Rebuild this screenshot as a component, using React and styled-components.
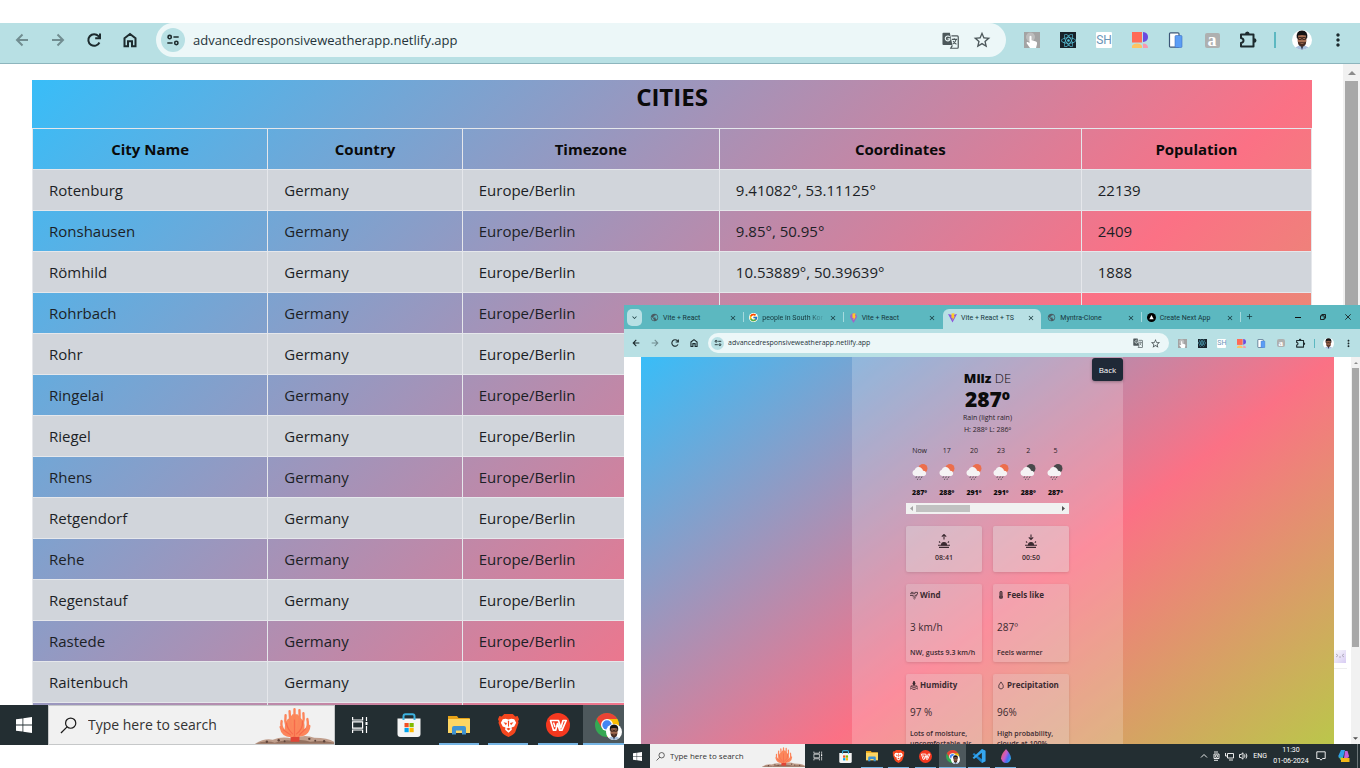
import React from "react";
import styled, { createGlobalStyle, css } from "styled-components";
import {
  MdStarBorder,
  MdMoreVert,
  MdPublic,
  MdKeyboardArrowDown,
  MdClose,
  MdAdd,
} from "react-icons/md";
import { FaReact, FaThermometerFull } from "react-icons/fa";
import { FcGoogle } from "react-icons/fc";

const Global = createGlobalStyle`
  *, *::before, *::after { box-sizing: border-box; }
  html, body, #root { margin: 0; height: 100%; }
  body {
    background: #fff;
    color: #111;
    font-family: "Open Sans", "Noto Sans", sans-serif;
    overflow: hidden;
  }
  button, input { font-family: inherit; color: inherit; }
  button { border: 0; background: none; padding: 0; }
  svg { display: block; flex: none; }
`;

const pageGradient = "linear-gradient(to bottom right, #38bdf8, #fb7185, #a3e635)";

/* ---------- shells ---------- */

const Desktop = styled.div`
  position: relative;
  display: flex;
  flex-direction: column;
  height: 100vh;
  padding: 23px 0;
`;

const Window = styled.section`
  flex: 1;
  min-height: 0;
  display: flex;
  flex-direction: column;
`;

const FrontWindow = styled(Window)`
  position: absolute;
  right: 0;
  bottom: 0;
  width: 736px;
  height: 463px;
  background: #fff;
`;

const Viewport = styled.div`
  flex: 1;
  min-height: 0;
  display: flex;
  overflow: hidden;
  background: #fff;
`;

/* ---------- browser toolbar ---------- */

const Bar = styled.header`
  flex: none;
  display: flex;
  align-items: center;
  height: ${(p) => (p.$small ? 28 : 41)}px;
  padding: 0 ${(p) => (p.$small ? 2 : 4)}px ${(p) => (p.$small ? 0 : 6)}px;
  background: #b8e0e4;
  color: #1d2b2e;
  ${(p) => !p.$small && css`border-bottom: 1px solid #8db5bd;`}
`;

const ButtonGroup = styled.div`
  display: flex;
  width: ${(p) => p.$width}px;
`;

const BarButton = styled.button`
  flex: 1;
  display: flex;
  align-items: center;
  justify-content: center;
  opacity: ${(p) => (p.$dim ? 0.45 : 1)};
`;

const AddressPill = styled.div`
  flex: 1;
  min-width: 0;
  display: flex;
  align-items: center;
  gap: ${(p) => (p.$small ? 4 : 8)}px;
  height: ${(p) => (p.$small ? 20 : 34)}px;
  margin: 0 ${(p) => (p.$small ? 4 : 8)}px;
  padding: 0 ${(p) => (p.$small ? 8 : 14)}px 0 ${(p) => (p.$small ? 3 : 5)}px;
  border-radius: 17px;
  background: #ecf7f8;
`;

const SiteBadge = styled.button`
  flex: none;
  display: flex;
  align-items: center;
  justify-content: center;
  width: ${(p) => (p.$small ? 13 : 24)}px;
  height: ${(p) => (p.$small ? 13 : 24)}px;
  border-radius: 50%;
  background: #b8e0e4;
`;

const Address = styled.input`
  flex: 1;
  min-width: 0;
  padding: 0;
  border: 0;
  outline: 0;
  background: none;
  font-size: ${(p) => (p.$small ? 7 : 13)}px;
  line-height: ${(p) => (p.$small ? 12 : 20)}px;
  color: #25343a;
`;

const PillActions = styled.div`
  display: flex;
  gap: ${(p) => (p.$small ? 7 : 13)}px;
  color: #4d585b;
`;

const BarDivider = styled.span`
  width: ${(p) => (p.$small ? 1 : 2)}px;
  height: ${(p) => (p.$small ? 9 : 16)}px;
  margin: 0 ${(p) => (p.$small ? 4 : 8)}px;
  background: #5cb8c1;
`;

const line = { fill: "none", stroke: "currentColor", strokeWidth: 2 };

const BackArrow = ({ size }) => (
  <svg width={size} height={size} viewBox="0 0 18 18" {...line}><path d="M15 9H4M9.500 3.500 4 9l5.500 5.500" /></svg>
);
const ForwardArrow = ({ size }) => (
  <svg width={size} height={size} viewBox="0 0 18 18" {...line}><path d="M3 9h11M8.500 3.500 14 9l-5.500 5.500" /></svg>
);
const ReloadIcon = ({ size }) => (
  <svg width={size} height={size} viewBox="0 0 18 18" {...line}>
    <path d="M14.400 11.500A5.800 5.800 0 1 1 13.500 5.200L14.500 6.500" />
    <path d="M15 2.500V7.300H10.200" />
  </svg>
);
const HomeIcon = ({ size }) => (
  <svg width={size} height={size} viewBox="0 0 18 18" {...line}>
    <path d="M3.500 7.200 9 3l5.500 4.200V15.200H11V10.200H7v5H3.500Z" />
  </svg>
);
const PuzzleIcon = ({ size }) => (
  <svg width={size} height={size} viewBox="0 0 20 20">
    <path d="M3 4.500H15.500V16.500H3V13Q5.500 12.500 5.500 10.500 5.500 8.500 3 8Z" fill="none" stroke="currentColor" strokeWidth="2" strokeLinejoin="round" />
    <path d="M7 4Q7 1.500 9.300 1.500T11.600 4ZM16 8.200Q18.500 8.200 18.500 10.500T16 12.800Z" fill="currentColor" />
  </svg>
);

function TuneIcon({ size }) {
  return (
    <svg width={size} height={size} viewBox="0 0 16 16" fill="none" stroke="#1d2b2e" strokeWidth="1.800">
      <circle cx="4.200" cy="4.600" r="1.900" />
      <path d="M8.500 4.600H14.500M1.500 11.400h6" />
      <circle cx="11.800" cy="11.400" r="1.900" />
    </svg>
  );
}

function Avatar({ size }) {
  return (
    <svg width={size} height={size} viewBox="0 0 20 20">
      <circle cx="10" cy="10" r="10" fill="#fff" />
      <path d="M3.400 17.500 7 15.500h6l3.600 2A10 10 0 0 1 10 20a10 10 0 0 1-6.600-2.500Z" fill="#a9c0dd" />
      <path d="m8.700 16 1.300 4 1.300-4Z" fill="#27324b" />
      <path d="M5.500 6.500Q5 16 10 16.500 15 16 14.500 6.500L12.500 3h-5Z" fill="#a56d52" />
      <path d="M4.800 8Q3.800.6 10 .5 16.200.6 15.200 8L14.300 9 13.800 5.500Q10 4.500 6.200 5.500L5.700 9Z" fill="#161314" />
      <path d="M5.800 11.500Q7 12.600 8 12.200h4q1 .4 2.200-.7-.4 4.900-4.200 5-3.800-.1-4.200-5Z" fill="#452a22" />
      <path d="M8.500 13.500h3" stroke="#a56d52" strokeWidth=".8" />
      <path d="M6.500 7.500h2.800v2H6.500zM10.700 7.500h2.800v2h-2.800zM9.300 8h1.400" fill="none" stroke="#2b1a16" strokeWidth=".8" />
    </svg>
  );
}

function TouchExt({ size }) {
  return (
    <svg width={size} height={size} viewBox="0 0 16 16">
      <rect width="16" height="16" fill="#a3a3a3" />
      <circle cx="6.500" cy="5" r="4.500" fill="#bdbdbd" />
      <path d="M5.500 4.500q1-1.500 2 0v3.700l4.500 1.300q1.500.8 1 2.500L12 16H6L2.500 11q.3-1.500 1.500-1l1.500 1.200Z" fill="#fff" />
    </svg>
  );
}

const ExtTile = styled.span`
  display: flex;
  align-items: center;
  justify-content: center;
  width: ${(p) => p.$size}px;
  height: ${(p) => p.$size}px;
  border-radius: ${(p) => p.$radius || 0}px;
  background: ${(p) => p.$bg};
  color: ${(p) => p.$color};
  font: ${(p) => p.$font || "inherit"};
`;

function ReactExt({ size }) {
  return (
    <ExtTile $size={size} $bg="#18222a" $color="#58c4dc">
      <FaReact size={size - 1} />
    </ExtTile>
  );
}

function BlocksExt({ size }) {
  return (
    <svg width={size} height={size} viewBox="0 0 16 16">
      <path d="M0 0h10v10.500H0z" fill="#ff6b57" />
      <path d="M11 0q5 .5 5 5t-5 5Z" fill="#6a4be0" />
      <path d="M0 16v-2q1-2.500 5-2.500t5 2.500v2Z" fill="#fdc463" />
      <path d="M11 11.500q5 0 5 4.500h-5Z" fill="#f79ab0" />
    </svg>
  );
}

function DeviceExt({ size }) {
  return (
    <svg width={size} height={size} viewBox="0 0 16 16">
      <rect x="1.500" y=".8" width="9.500" height="14.400" rx="1" fill="#fff" stroke="#3b5677" strokeWidth="1.200" />
      <rect x="7" y="3.500" width="7" height="12" rx="1" fill="#5b9df5" stroke="#3c6fc0" strokeWidth=".6" />
    </svg>
  );
}

function TranslateIcon({ size }) {
  return (
    <svg width={size} height={size} viewBox="0 0 18 18">
      <path d="M1.500.8h6.800l2.700 13H1.500q-1 0-1-1V1.800q0-1 1-1Z" fill="#4d585b" />
      <path d="M8.200 5.300A2.600 2.600 0 1 0 8.300 8.200V7.300H5.900" fill="none" stroke="#ecf7f8" strokeWidth="1.200" />
      <path d="M10 4.200h6.200q1 0 1 1v11q0 1-1 1H9.300l1.700-3" fill="none" stroke="#4d585b" strokeWidth="1.300" />
      <path d="M10.500 7.800H16M13 6.500v1.300M15 7.800q-.5 3-3.700 5M11.800 9.500q1.200 2.200 3.500 3.500" fill="none" stroke="#4d585b" strokeWidth="1.100" />
    </svg>
  );
}

function Toolbar({ small }) {
  const icon = small ? 11 : 20;
  const nav = small ? 10 : 18;
  const ext = small ? 9 : 16;
  return (
    <Bar $small={small}>
      <ButtonGroup $width={small ? 78 : 144}>
        <BarButton aria-label="Back" $dim={!small}><BackArrow size={nav} /></BarButton>
        <BarButton aria-label="Forward" $dim><ForwardArrow size={nav} /></BarButton>
        <BarButton aria-label="Reload"><ReloadIcon size={nav} /></BarButton>
        <BarButton aria-label="Home"><HomeIcon size={nav} /></BarButton>
      </ButtonGroup>
      <AddressPill $small={small}>
        <SiteBadge $small={small} aria-label="Site information"><TuneIcon size={small ? 8 : 14} /></SiteBadge>
        <Address
          $small={small}
          aria-label="Address"
          defaultValue="advancedresponsiveweatherapp.netlify.app"
          spellCheck={false}
        />
        <PillActions $small={small}>
          <BarButton aria-label="Translate"><TranslateIcon size={small ? 10 : 17} /></BarButton>
          <BarButton aria-label="Bookmark"><MdStarBorder size={icon} /></BarButton>
        </PillActions>
      </AddressPill>
      <ButtonGroup $width={small ? 137 : 252}>
        <BarButton aria-label="Touch"><TouchExt size={ext} /></BarButton>
        <BarButton aria-label="React tools"><ReactExt size={ext} /></BarButton>
        <BarButton aria-label="SH">
          <ExtTile $size={ext} $bg="#fff" $color="#6b95b8" $radius={1} $font={small ? "7px Roboto, sans-serif" : "12px Roboto, sans-serif"}>SH</ExtTile>
        </BarButton>
        <BarButton aria-label="Blocks"><BlocksExt size={ext} /></BarButton>
        <BarButton aria-label="Devices"><DeviceExt size={ext} /></BarButton>
        <BarButton aria-label="a">
          <ExtTile $size={small ? 8 : 15} $bg="#aeb0b0" $color="#fff" $radius={2} $font={small ? 'bold 9px "Liberation Serif", serif' : 'bold 18px "Liberation Serif", serif'}>a</ExtTile>
        </BarButton>
        <BarButton aria-label="Extensions"><PuzzleIcon size={icon} /></BarButton>
      </ButtonGroup>
      <BarDivider $small={small} />
      <ButtonGroup $width={small ? 39 : 72}>
        <BarButton aria-label="Profile"><Avatar size={icon} /></BarButton>
        <BarButton aria-label="Menu"><MdMoreVert size={icon} /></BarButton>
      </ButtonGroup>
    </Bar>
  );
}

/* ---------- scrollbars ---------- */

const Track = styled.div`
  flex: none;
  display: flex;
  flex-direction: column;
  align-items: center;
  width: ${(p) => (p.$small ? 9 : 17)}px;
  background: #f1f1f1;
`;

const Arrow = styled.span`
  display: flex;
  align-items: center;
  justify-content: center;
  height: ${(p) => (p.$small ? 11 : 17)}px;
`;

const Thumb = styled.div`
  flex: ${(p) => p.$grow};
  width: ${(p) => (p.$small ? 7 : 13)}px;
  background: #a8a8a8;
`;

const Rest = styled.div`
  flex: ${(p) => p.$grow};
`;

function Scrollbar({ small, thumb, rest }) {
  const s = small ? 4 : 8;
  return (
    <Track $small={small}>
      <Arrow $small={small}>
        <svg width={s} height={s} viewBox="0 0 8 8"><path d="M0 6 4 2l4 4Z" fill="#8b8b8b" /></svg>
      </Arrow>
      <Thumb $small={small} $grow={thumb} />
      <Rest $grow={rest} />
      {rest > 0 && (
        <Arrow $small={small}>
          <svg width={s + 1} height={s + 1} viewBox="0 0 8 8"><path d="M0 2 4 6l4-4Z" fill="#505050" /></svg>
        </Arrow>
      )}
    </Track>
  );
}

/* ---------- cities table ---------- */

const CitiesArea = styled.main`
  flex: 1;
  min-width: 0;
  padding: 16px 31px 0 32px;
`;

const CitiesCard = styled.div`
  min-height: 1275px;
  background: ${pageGradient};
`;

const Title = styled.h1`
  height: 48px;
  margin: 0;
  font-size: 24px;
  line-height: 34px;
  font-weight: 700;
  text-align: center;
  color: #0a0a0a;
`;

const Table = styled.table`
  width: 100%;
  table-layout: fixed;
  border-collapse: collapse;
`;

const cell = css`
  height: 41px;
  padding: 0 16px;
  border: 1px solid #e5e7eb;
  font-size: 15px;
  line-height: 24px;
`;

const Th = styled.th`
  ${cell}
  width: ${(p) => p.$width}%;
  font-weight: 700;
  text-align: center;
  color: #0a0a0a;
`;

const Td = styled.td`
  ${cell}
  color: #1c1f26;
`;

const Tr = styled.tr`
  &:nth-child(odd) { background: #d1d5db; }
`;

const columns = [
  ["City Name", 18.4],
  ["Country", 15.2],
  ["Timezone", 20.1],
  ["Coordinates", 28.3],
  ["Population", 18],
];

const cities = [
  ["Rotenburg", "9.41082°, 53.11125°", "22139"],
  ["Ronshausen", "9.85°, 50.95°", "2409"],
  ["Römhild", "10.53889°, 50.39639°", "1888"],
  ["Rohrbach"],
  ["Rohr"],
  ["Ringelai"],
  ["Riegel"],
  ["Rhens"],
  ["Retgendorf"],
  ["Rehe"],
  ["Regenstauf"],
  ["Rastede"],
  ["Raitenbuch"],
  [""],
];

function Cities() {
  return (
    <CitiesArea>
      <CitiesCard>
        <Title>CITIES</Title>
        <Table>
          <thead>
            <tr>{columns.map(([name, w]) => <Th key={name} $width={w}>{name}</Th>)}</tr>
          </thead>
          <tbody>
            {cities.map(([name, coords, population]) => (
              <Tr key={name}>
                <Td>{name}</Td>
                <Td>{name && "Germany"}</Td>
                <Td>{name && "Europe/Berlin"}</Td>
                <Td>{coords}</Td>
                <Td>{population}</Td>
              </Tr>
            ))}
          </tbody>
        </Table>
      </CitiesCard>
    </CitiesArea>
  );
}

/* ---------- tab strip ---------- */

const Strip = styled.nav`
  flex: none;
  display: flex;
  height: 24px;
  padding-left: 3px;
  background: #5cb8c0;
  color: #16373c;
`;

const TabSearch = styled.button`
  display: flex;
  align-items: center;
  justify-content: center;
  width: 15px;
  height: 17px;
  margin: 4px 3px 0 0;
  border-radius: 5px;
  background: #b8e0e4;
`;

const TabList = styled.div`
  display: flex;
  width: 596px;
  padding-top: 4px;
`;

const Tab = styled.div`
  flex: 1;
  min-width: 0;
  display: flex;
  align-items: center;
  gap: 4px;
  padding: 0 6px 3px 5px;
  ${(p) => p.$active && css`
    border-radius: 6px 6px 0 0;
    background: #b8e0e4;
  `}
`;

const TabLabel = styled.button`
  flex: 1;
  min-width: 0;
  white-space: nowrap;
  text-align: left;
  font-family: Roboto, sans-serif;
  font-size: 7px;
  line-height: 12px;
  ${(p) => p.$fade && css`mask-image: linear-gradient(to right, #000 75%, transparent);`}
`;

const TabDivider = styled.span`
  width: 1px;
  height: 10px;
  margin-top: 3px;
  background: ${(p) => (p.$hidden ? "transparent" : "#a5dade")};
`;

const IconButton = styled.button`
  flex: none;
  display: flex;
  align-items: center;
  justify-content: center;
`;

const NewTab = styled(IconButton)`
  width: 14px;
  margin: 3px auto 4px 1px;
`;

const WindowControls = styled.div`
  display: flex;
  width: 75px;
  button { flex: 1; }
`;

function ViteIcon({ round }) {
  return (
    <svg width="9" height="10" viewBox="0 0 9 10">
      {round
        ? <path d="M4.500 0Q8 1 8 4L4.500 10 1 4Q1 1 4.500 0Z" fill="#a064c8" />
        : <path d="M0 1 4.500 9.500 9 1 4.500 2Z" fill="#8a55e0" />}
      <path d="M3.500.5 6.500.2 6 3.500 7 3.300 4.500 7.500 4.600 4.700 3.400 5Z" fill="#ffc928" />
    </svg>
  );
}

const NextIcon = () => (
  <svg width="9" height="9" viewBox="0 0 9 9">
    <circle cx="4.500" cy="4.500" r="4.500" fill="#000" />
    <path d="m4.500 2 2.200 4.200H2.300Z" fill="#fff" />
  </svg>
);

const tabs = [
  { title: "Vite + React", icon: <MdPublic size={9} color="#4a5b62" />, divider: true },
  { title: "people in South Kor", icon: <FcGoogle size={9} />, divider: true, fade: true, google: true },
  { title: "Vite + React", icon: <ViteIcon round /> },
  { title: "Vite + React + TS", icon: <ViteIcon />, active: true },
  { title: "Myntra-Clone", icon: <MdPublic size={9} color="#4a5b62" />, divider: true },
  { title: "Create Next App", icon: <NextIcon />, divider: true },
];

const Favicon = styled.span`
  border-radius: 50%;
  background: ${(p) => (p.$white ? "#fff" : "none")};
`;

function TabStrip() {
  return (
    <Strip>
      <TabSearch aria-label="Search tabs"><MdKeyboardArrowDown size={9} /></TabSearch>
      <TabList>
        {tabs.map((t, i) => (
          <React.Fragment key={i}>
            <Tab $active={t.active}>
              <Favicon $white={t.google}>{t.icon}</Favicon>
              <TabLabel $fade={t.fade}>{t.title}</TabLabel>
              <IconButton aria-label="Close tab"><MdClose size={8} /></IconButton>
            </Tab>
            <TabDivider $hidden={!t.divider} />
          </React.Fragment>
        ))}
      </TabList>
      <NewTab aria-label="New tab"><MdAdd size={9} /></NewTab>
      <WindowControls>
        <IconButton aria-label="Minimize">
          <svg width="6" height="6" viewBox="0 0 6 6"><path d="M0 3.500h6" stroke="#111" /></svg>
        </IconButton>
        <IconButton aria-label="Restore">
          <svg width="6" height="6" viewBox="0 0 6 6" fill="none" stroke="#111" strokeWidth=".9"><path d="M.5 1.800h3.700v3.700H.5zM1.800 1.800V.5h3.700v3.700H4.200" /></svg>
        </IconButton>
        <IconButton aria-label="Close">
          <svg width="6" height="6" viewBox="0 0 6 6"><path d="m.3.3 5.400 5.400M5.700.3.3 5.700" stroke="#111" strokeWidth=".8" /></svg>
        </IconButton>
      </WindowControls>
    </Strip>
  );
}

/* ---------- weather page ---------- */

const WeatherArea = styled.main`
  flex: 1;
  min-width: 0;
  position: relative;
  padding: 0 17px;
`;

const WeatherBackdrop = styled.div`
  display: flex;
  justify-content: center;
  align-items: stretch;
  min-height: 530px;
  background: ${pageGradient};
`;

const WeatherPanel = styled.div`
  position: relative;
  width: 271px;
  padding: 12px 54px 0;
  background: rgba(255, 255, 255, 0.2);
`;

const BackButton = styled.button`
  position: absolute;
  top: 1px;
  right: 0;
  width: 31px;
  height: 23px;
  border-radius: 3px;
  background: #1f2937;
  box-shadow: 0 1px 3px rgba(0, 0, 0, 0.3);
  color: #fff;
  font-size: 8px;
  line-height: 12px;
`;

const Summary = styled.section`
  display: flex;
  flex-direction: column;
  align-items: center;
  color: #2a2228;
`;

const Place = styled.h2`
  margin: 0;
  font-size: 13px;
  line-height: 18px;
  font-weight: 800;
  color: #0b0b0b;
  span { font-weight: 300; }
`;

const BigTemp = styled.p`
  margin: 0;
  font-size: 21px;
  line-height: 25px;
  font-weight: 800;
  color: #0b0b0b;
`;

const Detail = styled.p`
  margin: 0;
  font-size: 7px;
  line-height: 12px;
`;

const Hours = styled.section`
  display: flex;
  margin-top: 9px;
`;

const Hour = styled.div`
  flex: 1;
  display: flex;
  flex-direction: column;
  align-items: center;
  gap: 6px;
  font-size: 7px;
  line-height: 12px;
  color: #2a2228;
  b { color: #0b0b0b; font-weight: 800; }
`;

const HourScroll = styled.div`
  display: flex;
  align-items: center;
  justify-content: space-between;
  height: 11px;
  margin-top: 4px;
  padding: 0 4px;
  background: #f1f1f1;
`;

const HourThumb = styled.span`
  width: 54px;
  height: 7px;
  margin: 0 auto 0 3px;
  background: #c1c1c1;
`;

const Tiles = styled.section`
  display: grid;
  grid-template-columns: 1fr 1fr;
  gap: 12px 11px;
  margin-top: 12px;
  color: #3b2a30;
`;

const tile = css`
  border-radius: 2px;
  background: rgba(225, 225, 225, ${(p) => p.$alpha || 0.25});
  box-shadow: 0 1px 3px rgba(0, 0, 0, 0.12);
`;

const SunTile = styled.div`
  ${tile}
  display: flex;
  flex-direction: column;
  align-items: center;
  gap: 4px;
  height: 46px;
  padding-top: 8px;
  font-size: 7px;
  line-height: 12px;
  font-weight: 600;
`;

const InfoTile = styled.article`
  ${tile}
  display: flex;
  flex-direction: column;
  min-height: 78px;
  padding: 5px 4px 4px;
`;

const InfoHead = styled.h3`
  display: flex;
  align-items: center;
  gap: 2px;
  margin: 0;
  font-size: 8px;
  line-height: 12px;
  font-weight: 700;
`;

const InfoValue = styled.p`
  margin: ${(p) => (p.$tight ? 14 : 19)}px 0 0;
  font-size: 10px;
  line-height: 15px;
`;

const InfoNote = styled.p`
  margin: ${(p) => (p.$tight ? 9 : 13)}px 0 0;
  font-size: 7px;
  line-height: 10px;
  font-weight: 600;
  white-space: pre;
`;

function RainCloud({ night }) {
  return (
    <svg width="18" height="18" viewBox="0 0 18 18">
      <circle cx="12" cy="5.500" r="4.500" fill={night ? "#48484a" : "#ec6e4c"} />
      <path d="M4 13a3.200 3.200 0 0 1-.3-6.200A4 4 0 0 1 10.500 5.300q1.500 1.500 1.500 2.400A2.700 2.700 0 0 1 13 13Z" fill="#f5f3f4" />
      <path d="m5.500 13.500-.6 1.500M8.300 13.500l-.6 1.500M11 13.500l-.6 1.500M6.800 15.700l-.4 1.200M9.400 15.700 9 16.900" stroke="#555" strokeWidth=".9" />
    </svg>
  );
}

function SunIcon({ down }) {
  return (
    <svg width="14" height="14" viewBox="0 0 14 14" fill="none" stroke="#3b2a30" strokeWidth="1.100">
      <path d={down ? "M7 .5v5M4.800 3.300 7 5.500l2.200-2.200" : "M7 5.500v-5M4.800 2.700 7 .5l2.200 2.200"} />
      <path d="M4.500 11a2.500 2.500 0 0 1 5 0Z" fill="#3b2a30" />
      <path d="M1 11.200h12M2 13.400h10M2 7.500 3.200 8.600M12 7.500 10.800 8.600" />
    </svg>
  );
}

const glyph = { width: 8, height: 9, viewBox: "0 0 9 10", fill: "none", stroke: "#3b2a30", strokeWidth: 0.9 };

const WindIcon = () => (
  <svg {...glyph}><path d="M0 3h5.500M0 5h4M1 1.500h3M5.500 3V1.500H8.500V3.500L5 5.500M3 6.500Q6 6 6 8 5 9.500 4 8.500M6 6l2-1" /></svg>
);
const HumidityIcon = () => (
  <svg {...glyph}><path d="M4.500 0Q7 3.500 4.500 5 2 3.500 4.500 0Z" fill="#3b2a30" /><path d="M0 7q1.500-1.500 3 0t3 0 3 0M0 9q1.500-1.500 3 0t3 0 3 0M1 5.500h7" /></svg>
);
const DropIcon = () => (
  <svg {...glyph}><path d="M4.500 1Q8 5 7 7.500 4.500 10.500 2 7.500 1 5 4.500 1Z" /></svg>
);

const hours = [
  ["Now", "287º"],
  ["17", "288º"],
  ["20", "291º"],
  ["23", "291º"],
  ["2", "288º", true],
  ["5", "287º", true],
];

const info = [
  { name: "Wind", icon: <WindIcon />, value: "3 km/h", note: "NW, gusts 9.3 km/h" },
  { name: "Feels like", icon: <FaThermometerFull size={8} />, value: "287º", note: "Feels warmer" },
  { name: "Humidity", icon: <HumidityIcon />, value: "97 %", note: "Lots of moisture,\nuncomfortable air", tight: true },
  { name: "Precipitation", icon: <DropIcon />, value: "96%", note: "High probability,\nclouds at 100%", tight: true },
];

const ChatBubble = styled.div`
  position: absolute;
  right: 4px;
  top: 292px;
  width: 13px;
  height: 20px;
  padding-top: 1px;
  border-bottom: 1px solid #eee;
`;

function Weather() {
  return (
    <WeatherArea>
      <WeatherBackdrop>
        <WeatherPanel>
          <BackButton>Back</BackButton>
          <Summary>
            <Place>Milz <span>DE</span></Place>
            <BigTemp>287º</BigTemp>
            <Detail>Rain (light rain)</Detail>
            <Detail>H: 288º L: 286º</Detail>
          </Summary>
          <Hours>
            {hours.map(([label, temp, night]) => (
              <Hour key={label}>
                {label}
                <RainCloud night={night} />
                <b>{temp}</b>
              </Hour>
            ))}
          </Hours>
          <HourScroll>
            <svg width="3" height="5" viewBox="0 0 3 5"><path d="M3 0v5L0 2.500Z" fill="#a3a3a3" /></svg>
            <HourThumb />
            <svg width="3" height="5" viewBox="0 0 3 5"><path d="M0 0v5l3-2.500Z" fill="#505050" /></svg>
          </HourScroll>
          <Tiles>
            <SunTile $alpha={0.4}><SunIcon />08:41</SunTile>
            <SunTile $alpha={0.4}><SunIcon down />00:50</SunTile>
            {info.map((t) => (
              <InfoTile key={t.name}>
                <InfoHead>{t.icon}{t.name}</InfoHead>
                <InfoValue $tight={t.tight}>{t.value}</InfoValue>
                <InfoNote $tight={t.tight}>{t.note}</InfoNote>
              </InfoTile>
            ))}
          </Tiles>
        </WeatherPanel>
      </WeatherBackdrop>
      <ChatBubble>
        <svg width="12" height="13" viewBox="0 0 12 13">
          <defs><linearGradient id="chat" x1="0" y1="0" x2="1" y2="1"><stop offset="0" stopColor="#fafafd" /><stop offset="1" stopColor="#d8ccf3" /></linearGradient></defs>
          <rect width="12" height="13" fill="url(#chat)" />
          <path d="m2 4 2 1.500L2 7M10 4 8 5.500 10 7M5 7h2" fill="none" stroke="#a6a1b0" strokeWidth=".8" />
        </svg>
      </ChatBubble>
    </WeatherArea>
  );
}

/* ---------- taskbar ---------- */

const TaskbarRoot = styled.footer`
  flex: none;
  display: flex;
  align-items: stretch;
  height: ${(p) => (p.$small ? 24 : 40)}px;
  background: #232e32;
  color: #fff;
`;

const StartButton = styled(IconButton)`
  width: ${(p) => (p.$small ? 26 : 48)}px;
`;

const SearchBox = styled.label`
  display: flex;
  align-items: center;
  gap: ${(p) => (p.$small ? 5 : 11)}px;
  width: ${(p) => (p.$small ? 155 : 287)}px;
  padding-left: ${(p) => (p.$small ? 6 : 11)}px;
  border: ${(p) => (p.$small ? 0 : 1)}px solid #c6c8c9;
  background: #f1f1f1;
  overflow: hidden;
`;

const SearchInput = styled.input`
  flex: 1;
  min-width: 0;
  padding: 0;
  border: 0;
  outline: 0;
  background: none;
  font-size: ${(p) => (p.$small ? 8 : 14)}px;
  line-height: ${(p) => (p.$small ? 12 : 24)}px;
  color: #333;
  &::placeholder { color: #333; opacity: 1; }
`;

const CoralArt = styled.span`
  align-self: flex-end;
`;

const Apps = styled.div`
  display: flex;
  width: ${(p) => (p.$small ? 214 : 396)}px;
`;

const AppButton = styled.button`
  flex: 1;
  position: relative;
  display: flex;
  align-items: center;
  justify-content: center;
  background: ${(p) => (p.$active ? "#4d585c" : "none")};
  &::after {
    content: "";
    position: absolute;
    bottom: 0;
    left: ${(p) => (p.$active ? 0 : 10)}%;
    right: ${(p) => (p.$active ? 0 : 10)}%;
    height: ${(p) => (p.$small ? 1 : 2)}px;
    background: ${(p) => (p.$running ? "#76b5e4" : "none")};
  }
`;

const WindowsLogo = ({ size }) => (
  <svg width={size} height={size} viewBox="0 0 16 16" fill="#fff">
    <path d="M0 2.300 6.500 1.400v6.200H0zM7.300 1.300 16 0v7.600H7.300zM0 8.400h6.500v6.200L0 13.700zM7.300 8.400H16V16l-8.700-1.200z" />
  </svg>
);

const Magnifier = ({ size }) => (
  <svg width={size} height={size} viewBox="0 0 18 18" fill="none" stroke="#1b1b1b" strokeWidth="1.300">
    <circle cx="11.300" cy="6.500" r="5.400" /><path d="M7.500 10.500 1 17" />
  </svg>
);

const Coral = ({ width, height }) => (
  <svg width={width} height={height} viewBox="0 0 80 38">
    <path d="M0 38Q10 32 18 34 28 30 38 33 50 28 60 32 74 32 80 36V38Z" fill="#c09e8c" />
    <path d="M0 38Q12 34 20 37 30 33 38 35 48 33 56 36 68 34 80 37V38Z" fill="#94715f" />
    <path d="M36 36V28h9v8Z" fill="#e04536" />
    <path d="M30 24Q30 14 35 12L38 8h5l5 6q4 5 1 12-4 5-9 5t-10-7Z" fill="#fb8a5c" />
    <g fill="none" stroke="#fc855b" strokeWidth="2.400" strokeLinecap="round">
      <path d="M40 29V3M38 27Q35 16 35 5M42 27Q46 17 45 4M38 28Q29 21 31 9M42 28Q51 20 49 7M38 29Q25 26 27 15M42 29Q56 26 53 13M38 30Q28 31 26 21M42 30Q54 30 55 20" />
    </g>
    <g fill="none" stroke="#f76a4b" strokeWidth="1.200" strokeLinecap="round">
      <path d="M40 30V14M38 28Q32 22 32 17M42 28Q49 23 48 15M36 29 29 24M45 29 51 23" />
    </g>
    <g fill="#5f453c"><circle cx="12" cy="36" r="1.200" /><circle cx="24" cy="34.500" r="1.200" /><circle cx="30" cy="35.500" r="1" /><circle cx="55" cy="33" r="1.200" /><circle cx="61" cy="35" r="1" /><circle cx="70" cy="35.500" r="1.200" /></g>
  </svg>
);

const TaskViewIcon = ({ size }) => (
  <svg width={size} height={size} viewBox="0 0 18 18" fill="none" stroke="#fff" strokeWidth="1.200">
    <path d="M1.600 1v3h10V1M1.600 5.800h10v6.400h-10zM1.600 17v-3h10v3M15.500 1v4M15.500 10v7" />
    <path d="M14.500 6h2v3h-2z" fill="#fff" stroke="none" />
  </svg>
);

const StoreIcon = ({ size }) => (
  <svg width={size} height={size} viewBox="0 0 24 24">
    <path d="M.5 5.500h23V21q0 3-3 3h-17q-3 0-3-3Z" fill="#f5f5f5" />
    <path d="M6.500 7V3.200Q6.500 1.200 8.500 1.200h7q2 0 2 2V7" fill="none" stroke="#3db2e0" strokeWidth="2" />
    <path d="M7.500 10h4.200v4.200H7.500z" fill="#f25022" /><path d="M12.500 10h4.200v4.200h-4.200z" fill="#7fba00" />
    <path d="M7.500 15h4.200v4.200H7.500z" fill="#00a4ef" /><path d="M12.500 15h4.200v4.200h-4.200z" fill="#ffb900" />
  </svg>
);

const FolderIcon = ({ size }) => (
  <svg width={size} height={size} viewBox="0 0 22 22">
    <path d="M0 2h9l1.500 2H21q1 0 1 1v5H0Z" fill="#e8a317" />
    <path d="M0 5h22v14H0z" fill="#fdd663" />
    <path d="M4 20.500v-6.500q0-2 2-2h10q2 0 2 2v6.500h-4v-4H8v4Z" fill="#3f93d2" />
  </svg>
);

const BraveIcon = ({ size }) => (
  <svg width={size} height={size} viewBox="0 0 24 24">
    <path d="M7.500 0h9L19 2.500l2.500-.3L23 5.500l-1 2 .5 1.500-3.500 10Q18 21 12 24 6 21 5 19L1.500 9 2 7.500l-1-2 1.500-3.300L5 2.500Z" fill="#f4461e" />
    <path d="M6 5.500 9 5l3 .8L15 5l3 .5 2 3.500-2 4-2.800 1 .3 2.500L12 19.500 8.500 16.500l.3-2.500L6 13 4 9Z" fill="#fff" />
    <path d="m6.800 8.500 3.700.8-1.200 2.500ZM17.200 8.500l-3.700.8 1.200 2.500ZM11.300 7h1.400l-.2 6h-1ZM9.800 15.500l2.200-1.200 2.200 1.200L12 17.200Z" fill="#f4461e" />
  </svg>
);

const WpsIcon = ({ size }) => (
  <svg width={size} height={size} viewBox="0 0 24 24">
    <circle cx="12" cy="12" r="12" fill="#f5381f" />
    <path d="M4.500 7.500H12.500L14.800 15 17 7.500h3.200L16 17.200h-2.300L11.500 10.500 9.700 17.200H7.500Z" fill="none" stroke="#fff" strokeWidth="1.700" strokeLinejoin="round" />
    <path d="M7.500 9.500 9 14" stroke="#fff" strokeWidth="1.500" />
  </svg>
);

const ChromeRoot = styled.span`
  position: relative;
  display: block;
`;

const ChromeBadge = styled.span`
  position: absolute;
  right: -${(p) => (p.$size > 20 ? 3 : 1)}px;
  bottom: -${(p) => (p.$size > 20 ? 3 : 1)}px;
`;

const ChromeIcon = ({ size }) => (
  <ChromeRoot>
    <svg width={size} height={size} viewBox="0 0 24 24">
      <circle cx="12" cy="12" r="12" fill="#34a853" />
      <path d="M12 6H22.400A12 12 0 0 1 12 24l5.200-9Z" fill="#fbbc05" />
      <path d="M1.600 6A12 12 0 0 1 22.400 6H12L6.800 15Z" fill="#ea4335" />
      <circle cx="12" cy="12" r="6" fill="#fff" /><circle cx="12" cy="12" r="4.700" fill="#4285f4" />
    </svg>
    <ChromeBadge $size={size}><Avatar size={size > 20 ? 16 : 9} /></ChromeBadge>
  </ChromeRoot>
);

const CodeIcon = ({ size }) => (
  <svg width={size} height={size} viewBox="0 0 24 24">
    <path d="m17 0 6 3v18l-6 3L1 9l2.500-2L17 17.500Z" fill="#1b84cf" />
    <path d="m17 0 6 3v18l-6 3V6.500L3.500 17 1 15Z" fill="#35a6ef" />
  </svg>
);

const DropApp = ({ size }) => (
  <svg width={size} height={size} viewBox="0 0 24 24">
    <defs><linearGradient id="ink" x1="0" y1=".2" x2="1" y2=".8"><stop offset="0" stopColor="#f0605a" /><stop offset=".45" stopColor="#c45bd0" /><stop offset=".7" stopColor="#4a6cf0" /><stop offset="1" stopColor="#22b8e8" /></linearGradient></defs>
    <path d="M12 0Q21 10 20.500 16 19 24 12 24 5 24 3.500 16 3 10 12 0Z" fill="url(#ink)" />
  </svg>
);

const apps = [
  { name: "Task view", Icon: TaskViewIcon, big: 18, little: 10 },
  { name: "Store", Icon: StoreIcon, big: 24, little: 13 },
  { name: "File Explorer", Icon: FolderIcon, big: 22, little: 12, running: true },
  { name: "Brave", Icon: BraveIcon, big: 23, little: 13, running: true },
  { name: "WPS Office", Icon: WpsIcon, big: 24, little: 13, running: true },
  { name: "Chrome", Icon: ChromeIcon, big: 24, little: 13, running: true, active: true },
  { name: "Code", Icon: CodeIcon, big: 24, little: 14, running: true },
  { name: "Paint", Icon: DropApp, big: 24, little: 14, running: true },
];

const Tray = styled.div`
  display: flex;
  align-items: center;
  gap: 5px;
  margin-left: auto;
  padding-right: 2px;
  font-family: Roboto, sans-serif;
  font-size: 7px;
  line-height: 11px;
`;

const Clock = styled.time`
  width: 36px;
  margin-left: 1px;
  text-align: center;
`;

const trayStroke = { fill: "none", stroke: "#fff", strokeWidth: 0.9 };

const Notification = styled(IconButton)`
  margin: 0 7px 0 2px;
`;

const PeekLine = styled.span`
  width: 1px;
  height: 24px;
  margin-left: 2px;
  background: #6b7477;
`;

function SystemTray() {
  return (
    <Tray>
      <svg width="8" height="8" viewBox="0 0 8 8" {...trayStroke}><path d="m1 5.500 3-3 3 3" /></svg>
      <svg width="7" height="10" viewBox="0 0 7 10" {...trayStroke}><path d="M1 3h5v4.500H1zM1 1h4M1 9.300h4" /><circle cx="3.500" cy="5.200" r="1.200" /></svg>
      <svg width="9" height="9" viewBox="0 0 9 9" {...trayStroke}><path d="M2.500 1.500h6v4.500h-6zM.5 1v3h2M4 8h4" /></svg>
      <svg width="9" height="8" viewBox="0 0 9 8" {...trayStroke}><path d="M.5 2.500h1.500L4 .8v6.400L2 5.500H.5ZM5.500 2.500q1 1.500 0 3M7 1.500q1.800 2.500 0 5" /></svg>
      <span>ENG</span>
      <Clock>11:30<br />01-06-2024</Clock>
      <Notification aria-label="Notifications">
        <svg width="10" height="10" viewBox="0 0 10 10" {...trayStroke}><path d="M.8.8h8.400v6.700H6.500L5 9.200 3.500 7.500H.8Z" /></svg>
      </Notification>
      <svg width="12" height="12" viewBox="0 0 12 12">
        <path d="M3 0h4L5 8H2Q0 8 .5 5.500Z" fill="#2f9fe8" /><path d="M7 1h2.500l1.500 5q0 2-2 2H6Z" fill="#c561d8" />
        <path d="M1 7h4L4 10H2.500Z" fill="#4cc48a" /><path d="M3 8h8.500v4H3Z" fill="#f3b617" />
      </svg>
      <PeekLine />
    </Tray>
  );
}

function Taskbar({ small }) {
  return (
    <TaskbarRoot $small={small}>
      <StartButton $small={small} aria-label="Start"><WindowsLogo size={small ? 9 : 16} /></StartButton>
      <SearchBox $small={small}>
        <Magnifier size={small ? 9 : 17} />
        <SearchInput $small={small} aria-label="Search" placeholder="Type here to search" />
        <CoralArt><Coral width={small ? 43 : 79} height={small ? 23 : 38} /></CoralArt>
      </SearchBox>
      <Apps $small={small}>
        {apps.map(({ name, Icon, big, little, running, active }) => (
          <AppButton key={name} aria-label={name} $small={small} $running={running} $active={active}>
            <Icon size={small ? little : big} />
          </AppButton>
        ))}
      </Apps>
      {small && <SystemTray />}
    </TaskbarRoot>
  );
}

export default function App() {
  return (
    <>
      <Global />
      <Desktop>
        <Window>
          <Toolbar />
          <Viewport>
            <Cities />
            <Scrollbar thumb={1} rest={0} />
          </Viewport>
          <Taskbar />
        </Window>
        <FrontWindow>
          <TabStrip />
          <Toolbar small />
          <Viewport>
            <Weather />
            <Scrollbar small thumb={279} rest={86} />
          </Viewport>
          <Taskbar small />
        </FrontWindow>
      </Desktop>
    </>
  );
}
